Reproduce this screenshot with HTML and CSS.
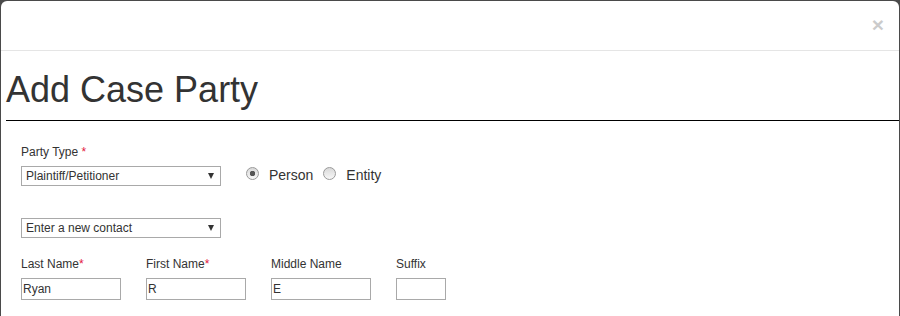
FILE: index.html
```html
<!DOCTYPE html>
<html lang="en">
<head>
  <meta charset="UTF-8">
  <meta name="viewport" content="width=device-width, initial-scale=1.0">
  <title>Add Case Party</title>
  <link rel="stylesheet" href="styles.css">
</head>
<body>
  <div class="modal">
    <div class="modal-header">
      <button type="button" class="close">&times;</button>
    </div>

    <div class="modal-body">
      <h1 class="modal-title">Add Case Party</h1>

      <form class="party-form">
        <div class="form-row">
          <div class="field">
            <label>Party Type <span class="req">*</span></label>
            <div class="select-wrap">
              <select>
                <option>Plaintiff/Petitioner</option>
              </select>
            </div>
          </div>
          <div class="radio-group">
            <label class="radio"><input type="radio" name="kind" checked> Person</label>
            <label class="radio"><input type="radio" name="kind"> Entity</label>
          </div>
        </div>

        <div class="form-row contact-row">
          <div class="select-wrap">
            <select>
              <option>Enter a new contact</option>
            </select>
          </div>
        </div>

        <div class="form-row name-row">
          <div class="field">
            <label>Last Name<span class="req">*</span></label>
            <input type="text" value="Ryan">
          </div>
          <div class="field">
            <label>First Name<span class="req">*</span></label>
            <input type="text" value="R">
          </div>
          <div class="field">
            <label>Middle Name</label>
            <input type="text" value="E">
          </div>
          <div class="field">
            <label>Suffix</label>
            <input type="text" class="short">
          </div>
        </div>
      </form>
    </div>
  </div>
</body>
</html>
```

FILE: styles.css
```css
html, body {
  height: 100%;
}

body {
  font-family: "Liberation Sans", Arial, sans-serif;
  margin: 0;
  padding: 1px 1px 0;
  box-sizing: border-box;
  background-color: #4a4a4a;
  color: #333;
  overflow: hidden;
}

.modal {
  background-color: #fff;
  border-radius: 6px 6px 0 0;
  height: 100%;
}

.modal-header {
  height: 49px;
  padding: 0 15px;
  border-bottom: 1px solid #e5e5e5;
  display: flex;
  align-items: center;
  justify-content: flex-end;
}

.close {
  background: none;
  border: 0;
  padding: 0;
  font-family: "Liberation Sans", Arial, sans-serif;
  font-size: 21px;
  font-weight: bold;
  line-height: 1;
  color: #000;
  opacity: 0.2;
  margin-top: -3px;
}

.modal-body {
  padding: 0 0 0 5px;
}

.modal-title {
  margin: 19px 0 0;
  padding-bottom: 10px;
  font-size: 36px;
  font-weight: normal;
  line-height: 40px;
  border-bottom: 1px solid #000;
}

.party-form {
  padding: 24px 0 0 15px;
}

.form-row {
  display: flex;
  align-items: flex-end;
}

.contact-row {
  margin-top: 32px;
}

.name-row {
  margin-top: 19px;
  gap: 25px;
}

.field label {
  display: block;
  font-size: 12px;
  line-height: 14px;
  margin-bottom: 7px;
}

.req {
  color: #e3173e;
}

.select-wrap {
  position: relative;
  width: 200px;
}

.select-wrap select {
  appearance: none;
  -webkit-appearance: none;
  width: 200px;
  height: 20px;
  box-sizing: border-box;
  border: 1px solid #a9a9a9;
  border-radius: 0;
  background: #fff;
  padding: 0 4px;
  font-family: "Liberation Sans", Arial, sans-serif;
  font-size: 12px;
  color: #333;
}

.select-wrap::after {
  content: "";
  position: absolute;
  right: 7px;
  top: 7px;
  border-style: solid;
  border-width: 6px 3.5px 0;
  border-color: #333 transparent transparent;
  pointer-events: none;
}

.radio-group {
  display: flex;
  align-items: center;
  height: 20px;
  margin: 0 0 1px 25px;
}

.radio {
  display: flex;
  align-items: center;
  font-size: 14px;
  margin-right: 10px;
}

.radio input {
  appearance: none;
  -webkit-appearance: none;
  width: 13px;
  height: 13px;
  margin: -3px 10px 0 0;
  box-sizing: border-box;
  border: 1px solid #9a9a9a;
  border-radius: 50%;
  background: linear-gradient(#d9d9d9, #f7f7f7);
}

.radio input:checked {
  background: radial-gradient(circle, #555 0 2.5px, transparent 3px), linear-gradient(#d9d9d9, #f7f7f7);
}

.name-row input {
  width: 100px;
  height: 22px;
  box-sizing: border-box;
  border: 1px solid #a9a9a9;
  padding: 0 1px;
  font-family: "Liberation Sans", Arial, sans-serif;
  font-size: 12px;
  color: #333;
}

.name-row input.short {
  width: 50px;
}
```
